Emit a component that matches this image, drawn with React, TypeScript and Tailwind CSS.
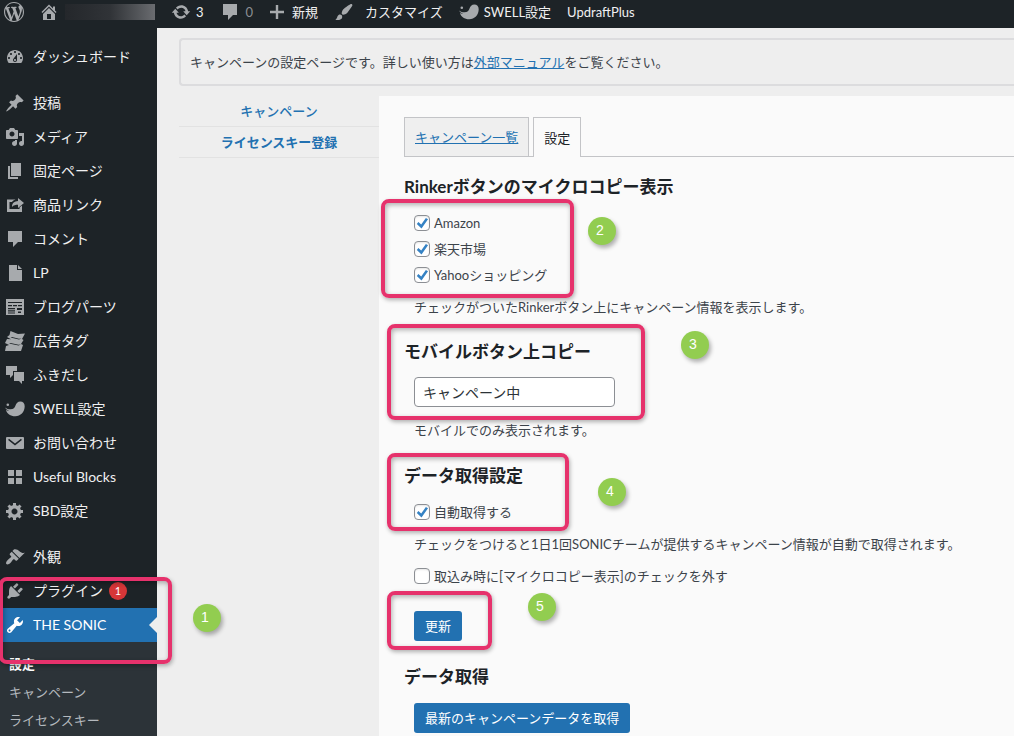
import { useState, type ReactNode } from "react";

const paths = {
  wordpress:
    "M20 10c0-5.51-4.49-10-10-10C4.48 0 0 4.49 0 10c0 5.52 4.48 10 10 10 5.51 0 10-4.48 10-10zM7.78 15.37L4.37 6.22c.55-.02 1.17-.08 1.17-.08.5-.06.44-1.13-.06-1.11 0 0-1.45.11-2.37.11-.18 0-.37 0-.58-.01C4.12 2.69 6.87 1.11 10 1.11c2.33 0 4.45.87 6.05 2.34-.68-.11-1.65.39-1.65 1.58 0 .74.45 1.36.9 2.1.35.61.55 1.36.55 2.46 0 1.49-1.4 5-1.4 5l-3.03-8.37c.54-.02.82-.17.82-.17.5-.05.44-1.25-.06-1.22 0 0-1.44.12-2.38.12-.87 0-2.33-.12-2.33-.12-.5-.03-.56 1.2-.06 1.22l.92.08 1.26 3.41zM17.41 10c.24-.64.74-1.87.43-4.25.7 1.29 1.05 2.71 1.05 4.25 0 3.29-1.73 6.24-4.4 7.78.97-2.59 1.94-5.2 2.92-7.78zM6.1 18.09C3.12 16.65 1.11 13.53 1.11 10c0-1.3.23-2.48.72-3.59C3.25 10.3 4.67 14.2 6.1 18.09zm4.03-6.63l2.58 6.98c-.86.29-1.76.45-2.71.45-.79 0-1.57-.11-2.29-.33.81-2.38 1.62-4.74 2.42-7.1z",
  home: "M16 8.5l1.53 1.53-1.06 1.06L10 4.6l-6.47 6.49-1.06-1.06L10 2.5l4 4v-2h2v4zm-6-2.46l6 5.99V18H4v-5.97zM12 17v-5H8v5h4z",
  update:
    "M10.2 3.28c3.53 0 6.43 2.61 6.92 6h2.08l-3.5 4-3.5-4h2.32c-.45-1.97-2.21-3.45-4.32-3.45-1.45 0-2.73.71-3.54 1.78L4.95 5.66C6.23 4.2 8.11 3.28 10.2 3.28zm-.4 13.44c-3.52 0-6.43-2.61-6.92-6H.8l3.5-4c1.17 1.33 2.33 2.67 3.5 4H5.48c.45 1.97 2.21 3.45 4.32 3.45 1.45 0 2.73-.71 3.54-1.78l1.71 1.95c-1.28 1.46-3.15 2.38-5.25 2.38z",
  plus: "M17 8.8v2.4h-5.8V17H8.8v-5.8H3V8.8h5.8V3h2.4v5.8H17z",
  brush:
    "M18.33 3.57s.27-.8-.31-1.36c-.53-.52-1.22-.24-1.22-.24-.61.3-5.76 3.47-7.67 5.57-.86.96-2.06 3.79-1.09 4.82.92.98 3.96-.17 4.79-1 2.06-2.06 5.21-7.17 5.5-7.79zM1.4 17.65c2.37-1.56 1.46-3.41 3.23-4.64.93-.65 2.22-.62 3.08.29.63.67.8 2.57-.16 3.46-1.57 1.45-4 1.55-6.15.89z",
  dashboard:
    "M3.76 16h12.48c1.1-1.37 1.76-3.11 1.76-5 0-4.42-3.58-8-8-8s-8 3.58-8 8c0 1.89.66 3.63 1.76 5zM10 4c.55 0 1 .45 1 1s-.45 1-1 1-1-.45-1-1 .45-1 1-1zM6 6c.55 0 1 .45 1 1s-.45 1-1 1-1-.45-1-1 .45-1 1-1zm8 0c.55 0 1 .45 1 1s-.45 1-1 1-1-.45-1-1 .45-1 1-1zm-5.37 5.55L12 7v6c0 1.1-.9 2-2 2s-2-.9-2-2c0-.57.24-1.08.63-1.45zM4 10c.55 0 1 .45 1 1s-.45 1-1 1-1-.45-1-1 .45-1 1-1zm12 0c.55 0 1 .45 1 1s-.45 1-1 1-1-.45-1-1 .45-1 1-1zm-5 3c0-.55-.45-1-1-1s-1 .45-1 1 .45 1 1 1 1-.45 1-1z",
  pin: "M10.44 3.02l1.82-1.82 6.36 6.35-1.83 1.82c-1.05-.68-2.48-.57-3.41.36l-.75.75c-.92.93-1.04 2.35-.35 3.41l-1.83 1.82-2.41-2.41-2.8 2.79c-.42.42-3.38 2.71-3.8 2.29s1.86-3.39 2.28-3.81l2.79-2.79L4.1 9.36l1.83-1.82c1.05.69 2.48.57 3.4-.36l.75-.75c.93-.92 1.05-2.35.36-3.41z",
  media:
    "M13 11V4c0-.55-.45-1-1-1h-1.67L9 1H5L3.67 3H2c-.55 0-1 .45-1 1v7c0 .55.45 1 1 1h10c.55 0 1-.45 1-1zM7 4.5c1.38 0 2.5 1.12 2.5 2.5S8.38 9.5 7 9.5 4.5 8.38 4.5 7 5.62 4.5 7 4.5zM14 6h5v10.5c0 1.38-1.12 2.5-2.5 2.5S14 17.88 14 16.5s1.12-2.5 2.5-2.5c.17 0 .34.02.5.05V9h-3V6zm-4 8.05V13h2v3.5c0 1.38-1.12 2.5-2.5 2.5S7 17.88 7 16.5 8.12 14 9.5 14c.17 0 .34.02.5.05z",
  pages: "M6 15V2h10v13H6zm-1 1h8v2H3V5h2v11z",
  share: "M19 8l-6 5V9.8c-2.2 0-4.5.3-6 2.2.1-4 2.5-5.7 6-5.9V3zM4.5 14h10v-1.5L17 10.5V17H2V4.5h8.500C9 5 7.500 6 7 7H4.500z",
  comment: "M3 2h14v11h-4l-5 5v-5H3z",
  file: "M4 2h8v5h5v11H4zM13 2l4 4h-4z",
  layout:
    "M1 2h18v16H1zM3 5v1h14V5zM3 8v1.2h4V8zM8 8v1.2h4V8zM13 8v1.2h4V8zM3 11v1.2h7V11zM3 13.2v1.2h7v-1.2zM3 15.4v1.2h7v-1.2zM12 11v2h5v-2zM13 14.5v1.5h3v-1.5z",
  ads: "M5.5 0L13 3l7-.5-3 5.5 1.5 1-2.5 4 2 1-2 6H0l1-5 3-1-4-2 2-4 4 .2L2 6l2.500-2zM5.500 6.500L14 8.600l2.500-1-2.500.2-7-1.800zM4 12.600l9.500 2 2.500-1.200-2.500.4-8-1.700z",
  chat: "M1 1h11v5H8v4l-3 3v-3H1zM9 7h10v9h-2v3l-3-3H9z",
  swell:
    "M1.500 5.800a1.300 1.300 0 112.600 0 1.300 1.300 0 01-2.600 0zM0 8.500c1.500 1.300 3.500 1.800 5.500 1.800 3 0 4.300-1.500 5-3.700C11.200 4.200 12.800 2.500 15.300 2.500c2.700 0 4.400 2 4.400 4.800 0 5.700-4.200 10-9.400 10C5.500 17.300 1.700 14.500 1 11c1 .6 2 .8 3 .7C2.200 11 .8 10 0 8.500z",
  mail: "M2 4h16a1 1 0 011 1v10a1 1 0 01-1 1H2a1 1 0 01-1-1V5a1 1 0 011-1zM4 5.8L3.1 7l6.9 5.5L16.9 7 16 5.8l-6 4.7z",
  blocks: "M9 9V3H3v6h6zm8 0V3h-6v6h6zm-8 8v-6H3v6h6zm8 0v-6h-6v6h6z",
  gear: "M18 12h-2.18c-.17.7-.44 1.35-.81 1.93l1.54 1.54-2.1 2.1-1.54-1.54c-.58.36-1.23.63-1.91.79V19H8v-2.18c-.68-.16-1.33-.43-1.91-.79l-1.54 1.54-2.12-2.12 1.54-1.54c-.36-.58-.63-1.23-.79-1.91H1V9.03h2.17c.16-.7.44-1.35.8-1.94L2.43 5.55l2.1-2.1 1.54 1.54c.58-.37 1.24-.64 1.93-.81V2h3v2.18c.68.16 1.33.43 1.91.79l1.54-1.54 2.12 2.12-1.54 1.54c.36.59.64 1.24.8 1.94H18V12zm-8.5 1.5c1.66 0 3-1.34 3-3s-1.34-3-3-3-3 1.34-3 3 1.34 3 3 3z",
  appearance:
    "M14.48 11.06L7.41 3.99l1.5-1.5c.5-.56 2.3-.47 3.51.32 1.21.8 1.43 1.28 2.91 2.1 1.18.64 2.45 1.26 4.45.85zm-.71.71L6.7 4.7 4.93 6.47c-.39.39-.39 1.02 0 1.41l1.06 1.06c.39.39.39 1.03 0 1.42-.6.6-1.43 1.11-2.21 1.69-.35.26-.7.53-1.01.84C1.43 14.23.4 16.08 1.4 17.07c.99 1 2.84-.03 4.18-1.36.31-.31.58-.66.85-1.02.57-.78 1.08-1.61 1.69-2.21.39-.39 1.02-.39 1.41 0l1.06 1.06c.39.39 1.02.39 1.41 0z",
  plugin:
    "M13.11 4.36L9.87 7.6 8 5.73l3.24-3.24c.35-.34 1.05-.2 1.56.32.52.51.66 1.21.31 1.55zm-8 1.77l.91-1.12 9.01 9.01-1.19.84c-.71.71-2.63 1.16-3.82 1.16H6.14L4.9 17.26c-.59.59-1.54.59-2.12 0-.59-.58-.59-1.53 0-2.12l1.24-1.24v-3.88c0-1.13.4-3.19 1.09-3.89zm7.26 3.97l3.24-3.24c.34-.35 1.04-.21 1.55.31.52.51.66 1.21.31 1.55l-3.24 3.25z",
  wrench:
    "M16.68 9.77c-1.34 1.34-3.3 1.67-4.95.99l-5.41 6.52c-.99.99-2.59.99-3.58 0s-.99-2.59 0-3.57l6.52-5.42c-.68-1.65-.35-3.61.99-4.95 1.28-1.28 3.12-1.62 4.72-1.06l-2.89 2.89 2.82 2.82 2.86-2.87c.53 1.58.18 3.39-1.08 4.65zM3.81 16.21c.4.39 1.04.39 1.43 0 .4-.4.4-1.04 0-1.43-.39-.4-1.03-.4-1.43 0-.39.39-.39 1.03 0 1.43z",
};

type IconName = keyof typeof paths;

function Icon({ name, className = "size-5" }: { name: IconName; className?: string }) {
  return (
    <svg viewBox="0 0 20 20" className={`shrink-0 ${className}`} fill="currentColor" fillRule="evenodd" aria-hidden="true">
      <path d={paths[name]} />
    </svg>
  );
}

const mainMenu: { name: string; icon: IconName }[] = [
  { name: "投稿", icon: "pin" },
  { name: "メディア", icon: "media" },
  { name: "固定ページ", icon: "pages" },
  { name: "商品リンク", icon: "share" },
  { name: "コメント", icon: "comment" },
  { name: "LP", icon: "file" },
  { name: "ブログパーツ", icon: "layout" },
  { name: "広告タグ", icon: "ads" },
  { name: "ふきだし", icon: "chat" },
  { name: "SWELL設定", icon: "swell" },
  { name: "お問い合わせ", icon: "mail" },
  { name: "Useful Blocks", icon: "blocks" },
  { name: "SBD設定", icon: "gear" },
];

function MenuItem({ name, icon, badge, active }: { name: string; icon: IconName; badge?: number; active?: boolean }) {
  return (
    <a
      href="#"
      className={`relative flex h-[34px] items-center pl-[5px] text-sm ${
        active ? "bg-[#2271b1] text-white" : "text-[#f0f0f1]"
      }`}
    >
      <Icon name={icon} className={active ? "size-5 text-white" : "size-5 text-[#a7aaad]"} />
      <span className="ml-2">{name}</span>
      {badge && (
        <span className="ml-1.5 flex size-[18px] items-center justify-center rounded-full bg-[#d63638] text-[11px] text-white">{badge}</span>
      )}
      {active && <span className="absolute right-0 top-1/2 -translate-y-1/2 border-y-8 border-r-8 border-y-transparent border-r-[#eee]" />}
    </a>
  );
}

function AdminBar() {
  return (
    <header className="flex h-7 shrink-0 items-center bg-[#1d2327] pb-1 pl-1 text-[13px] whitespace-nowrap text-[#f0f0f1]">
      <a href="#" aria-label="WordPress" className="mr-[15px] text-[#a7aaad]">
        <Icon name="wordpress" />
      </a>
      <a href="#" aria-label="サイト" className="mr-4 flex items-center gap-1.5 text-[#a7aaad]">
        <Icon name="home" />
        <span className="h-4 w-[90px] bg-linear-to-r from-[#24272b] via-[#303337] to-[#6a6c70]" />
      </a>
      <a href="#" className="mr-4 flex items-center gap-[5px]">
        <Icon name="update" className="size-5 text-[#a7aaad]" />3
      </a>
      <a href="#" className="mr-[14px] flex items-center gap-1.5 text-[#8c8f94]">
        <Icon name="comment" className="size-5 text-[#a7aaad]" />0
      </a>
      <a href="#" className="mr-4 flex items-center gap-[5px]">
        <Icon name="plus" className="size-5 text-[#a7aaad]" />
        新規
      </a>
      <a href="#" className="mr-4 flex items-center gap-[11px]">
        <Icon name="brush" className="size-5 text-[#a7aaad]" />
        カスタマイズ
      </a>
      <a href="#" className="mr-4 flex items-center gap-[5px]">
        <Icon name="swell" className="size-5 text-[#a7aaad]" />
        SWELL設定
      </a>
      <a href="#">UpdraftPlus</a>
    </header>
  );
}

function Sidebar() {
  return (
    <nav className="relative flex w-[157px] shrink-0 flex-col bg-[#1d2327] pt-3">
      <MenuItem name="ダッシュボード" icon="dashboard" />
      <div className="mt-3">
        {mainMenu.map((item) => (
          <MenuItem key={item.name} {...item} />
        ))}
      </div>
      <div className="mt-3">
        <MenuItem name="外観" icon="appearance" />
        <MenuItem name="プラグイン" icon="plugin" badge={1} />
        <MenuItem name="THE SONIC" icon="wrench" active />
      </div>
      <div className="flex flex-1 flex-col gap-2 bg-[#2c3338] pt-3 pl-[9px] text-[13px] leading-5 text-[#b4b9be]">
        <a href="#" className="font-bold text-white">設定</a>
        <a href="#">キャンペーン</a>
        <a href="#">ライセンスキー</a>
      </div>
      <Frame className="-left-px top-[549px] h-[87px] w-[173px]" />
      <Marker n={1} className="left-[193px] top-[576px]" />
    </nav>
  );
}

// Annotation overlays
function Frame({ className }: { className: string }) {
  return (
    <div
      className={`pointer-events-none absolute z-10 rounded-lg border-4 border-[#e6326c] shadow-[1px_2px_4px_rgba(0,0,0,0.3),inset_1px_2px_5px_rgba(0,0,0,0.3)] ${className}`}
    />
  );
}

function Marker({ n, className }: { n: number; className: string }) {
  return (
    <span
      className={`absolute z-10 flex size-7 items-center justify-center rounded-full bg-[#92cd50] pr-1 pb-0.5 font-['Liberation_Sans',sans-serif] text-sm text-white shadow-[2px_3px_4px_rgba(0,0,0,0.3)] ${className}`}
    >
      {n}
    </span>
  );
}

function Check({ label, defaultChecked = false }: { label: string; defaultChecked?: boolean }) {
  const [checked, setChecked] = useState(defaultChecked);

  return (
    <label className="flex w-fit items-center gap-1">
      <span className="relative flex size-4">
        <input
          type="checkbox"
          checked={checked}
          onChange={(e) => setChecked(e.target.checked)}
          className="size-4 appearance-none rounded border border-[#8c8f94] bg-white shadow-[inset_0_1px_2px_rgba(0,0,0,0.1)]"
        />
        {checked && (
          <svg viewBox="0 0 20 20" className="pointer-events-none absolute inset-0 size-4" fill="#3582c4" aria-hidden="true">
            <path d="M14.83 3.8l2.700 1.600L9.400 17 3.500 11.300l2-2.400 3.500 3z" />
          </svg>
        )}
      </span>
      <span>{label}</span>
    </label>
  );
}

function Heading({ children }: { children: ReactNode }) {
  return <h2 className="text-[17px] leading-6 font-bold text-[#1d2327]">{children}</h2>;
}

function Settings() {
  return (
    <main className="relative min-w-0 flex-1 bg-[#fafafa] pt-[21px] pl-[25px]">
      <div className="flex h-10 items-stretch gap-1 border-b border-[#c3c4c7]">
        <a href="#" className="-mb-px flex items-center border border-[#c3c4c7] bg-[#efefef] px-2.5 text-[#2271b1] underline">
          キャンペーン一覧
        </a>
        <a href="#" className="-mb-px flex items-center border border-b-0 border-[#c3c4c7] bg-[#fafafa] px-2.5 text-[#1d2327]">
          設定
        </a>
      </div>

      <form onSubmit={(e) => e.preventDefault()}>
        <section className="pt-[18px]">
          <Heading>Rinkerボタンのマイクロコピー表示</Heading>
          <div className="flex flex-col gap-1.5 pt-[14px] pl-2.5">
            <Check label="Amazon" defaultChecked />
            <Check label="楽天市場" defaultChecked />
            <Check label="Yahooショッピング" defaultChecked />
            <p className="pt-1.5">チェックがついたRinkerボタン上にキャンペーン情報を表示します。</p>
          </div>
        </section>

        <section className="pt-[23px]">
          <label htmlFor="copy">
            <Heading>モバイルボタン上コピー</Heading>
          </label>
          <div className="pt-[13px] pl-2.5">
            <input
              id="copy"
              defaultValue="キャンペーン中"
              className="block h-[30px] w-[201px] rounded border border-[#8c8f94] bg-white px-2 text-sm text-[#2c3338]"
            />
            <p className="pt-[13px]">モバイルでのみ表示されます。</p>
          </div>
        </section>

        <section className="pt-6">
          <Heading>データ取得設定</Heading>
          <div className="flex flex-col gap-3 pt-[14px] pl-2.5">
            <Check label="自動取得する" defaultChecked />
            <p>チェックをつけると1日1回SONICチームが提供するキャンペーン情報が自動で取得されます。</p>
            <Check label="取込み時に[マイクロコピー表示]のチェックを外す" />
          </div>
        </section>

        <button type="submit" className="mt-[25px] ml-2.5 block h-[30px] rounded-[3px] bg-[#2271b1] px-[11px] text-white">
          更新
        </button>
      </form>

      <section className="pt-6">
        <Heading>データ取得</Heading>
        <button type="button" className="mt-[14px] ml-2.5 block h-[30px] rounded-[3px] bg-[#2271b1] px-[11px] text-white">
          最新のキャンペーンデータを取得
        </button>
      </section>

      <Frame className="left-0.5 top-[103px] h-[99px] w-[193px]" />
      <Marker n={2} className="left-[209px] top-[121px]" />
      <Frame className="left-2 top-[228px] h-[96px] w-[258px]" />
      <Marker n={3} className="left-[302px] top-[235px]" />
      <Frame className="left-2 top-[357px] h-[78px] w-[182px]" />
      <Marker n={4} className="left-[219px] top-[382px]" />
      <Frame className="left-2 top-[495px] h-[59px] w-[105px]" />
      <Marker n={5} className="left-[149px] top-[497px]" />
    </main>
  );
}

export default function App() {
  return (
    <div className="flex min-h-screen flex-col bg-[#eee] font-['Lato','Noto_Sans_CJK_JP',sans-serif] text-[13px] leading-5 text-[#3c434a]">
      <AdminBar />
      <div className="flex flex-1">
        <Sidebar />
        <div className="flex min-w-0 flex-1 flex-col pt-2.5 pl-[22px]">
          <p className="flex h-12 shrink-0 items-center rounded-l border-2 border-r-0 border-[#dcdcde] px-[9px]">
            キャンペーンの設定ページです。詳しい使い方は
            <a href="#" className="text-[#2271b1] underline">外部マニュアル</a>
            をご覧ください。
          </p>
          <div className="mt-2.5 flex flex-1">
            <nav className="w-[200px] shrink-0 text-center font-medium text-[#2271b1]">
              <a href="#" className="block border-b border-[#e2e2e2] py-[5px]">キャンペーン</a>
              <a href="#" className="block border-b border-[#e2e2e2] py-[5px] font-bold">ライセンスキー登録</a>
            </nav>
            <Settings />
          </div>
        </div>
      </div>
    </div>
  );
}
